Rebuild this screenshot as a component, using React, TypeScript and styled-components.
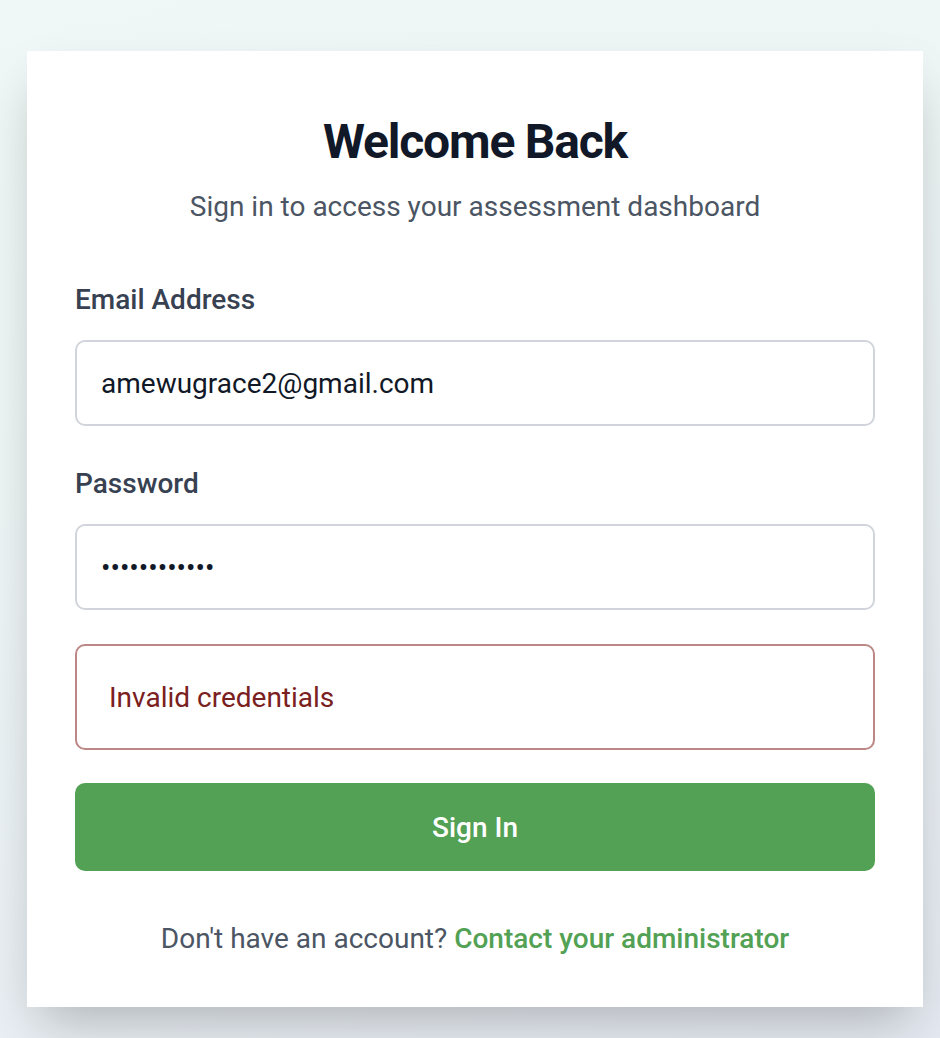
import styled, { createGlobalStyle } from 'styled-components'

const GlobalStyle = createGlobalStyle`
  html, body {
    margin: 0;
    padding: 0;
  }
  body {
    min-height: 1038px;
    background: linear-gradient(160deg, #eff8f6 0%, #edf4f5 45%, #e5eaf2 100%);
    font-family: Roboto, "Liberation Sans", sans-serif;
  }
`

const Page = styled.main`
  padding: 51px 0 0 27px;
`

const Card = styled.section`
  box-sizing: border-box;
  width: 896px;
  height: 956px;
  padding: 63px 48px 0;
  background: #ffffff;
  box-shadow: 0 25px 50px -12px rgba(0, 0, 0, 0.25);
`

const Title = styled.h1`
  margin: 0;
  font-size: 48px;
  line-height: 56px;
  font-weight: 700;
  letter-spacing: -0.025em;
  color: #111827;
  text-align: center;
`

const Subtitle = styled.p`
  margin: 19px 0 0;
  font-size: 28px;
  line-height: 36px;
  color: #4b5563;
  text-align: center;
`

const Form = styled.form`
  display: flex;
  flex-direction: column;
  margin-top: 59px;
`

const Field = styled.div<{ $gap?: number }>`
  display: flex;
  flex-direction: column;
  gap: 24px;
  margin-top: ${(p) => p.$gap ?? 0}px;
`

const Label = styled.label`
  font-size: 28px;
  line-height: 32px;
  font-weight: 500;
  color: #374151;
`

const Input = styled.input`
  box-sizing: border-box;
  width: 100%;
  height: 86px;
  padding: 0 24px;
  border: 2px solid #d1d5db;
  border-radius: 10px;
  font-family: inherit;
  font-size: 28px;
  color: #111827;
  background: #ffffff;
  outline: none;
`

const ErrorBox = styled.div`
  box-sizing: border-box;
  display: flex;
  align-items: center;
  height: 106px;
  margin-top: 34px;
  padding: 0 32px;
  border: 2px solid #bb8885;
  border-radius: 10px;
  font-size: 28px;
  color: #7a2020;
`

const SubmitButton = styled.button`
  height: 88px;
  margin-top: 33px;
  border: none;
  border-radius: 10px;
  background: #52a154;
  color: #ffffff;
  font-family: inherit;
  font-size: 28px;
  font-weight: 500;
  cursor: pointer;
`

const Footer = styled.p`
  margin: 50px 0 0;
  font-size: 28px;
  line-height: 36px;
  color: #4b5563;
  text-align: center;
`

const Link = styled.a`
  color: #52a154;
  font-weight: 500;
  text-decoration: none;
`

export default function App() {
  return (
    <>
      <GlobalStyle />
      <Page>
        <Card>
          <Title>Welcome Back</Title>
          <Subtitle>Sign in to access your assessment dashboard</Subtitle>
          <Form onSubmit={(e) => e.preventDefault()}>
            <Field>
              <Label htmlFor="email">Email Address</Label>
              <Input id="email" type="email" defaultValue="amewugrace2@gmail.com" />
            </Field>
            <Field $gap={42}>
              <Label htmlFor="password">Password</Label>
              <Input id="password" type="password" defaultValue="password1234" />
            </Field>
            <ErrorBox>Invalid credentials</ErrorBox>
            <SubmitButton type="submit">Sign In</SubmitButton>
          </Form>
          <Footer>
            Don't have an account? <Link href="#">Contact your administrator</Link>
          </Footer>
        </Card>
      </Page>
    </>
  )
}
